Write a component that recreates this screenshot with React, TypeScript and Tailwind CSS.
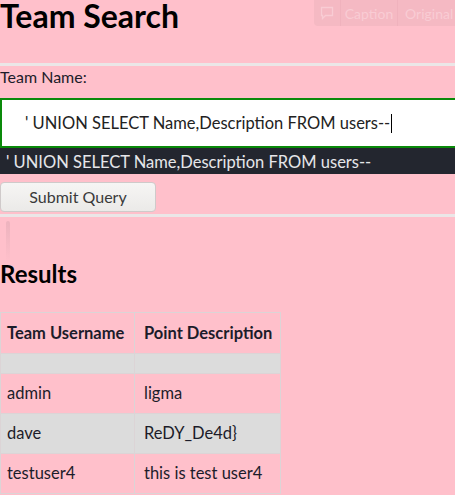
import React from "react";

export default function App() {
  const rows: [string, string, boolean][] = [
    ["", "", true],
    ["admin", "ligma", false],
    ["dave", "ReDY_De4d}", true],
    ["testuser4", "this is test user4", false],
  ];
  return (
    <div
      className="relative min-h-screen w-[455px] h-[495px] overflow-hidden bg-[#ffc0cb] text-[#111]"
      style={{ fontFamily: "Lato, 'Noto Sans', sans-serif" }}
    >
      {/* faint overlay toolbar */}
      <div className="absolute right-0 top-0 z-10 flex h-[26px] w-[141px] items-center rounded-bl-[4px] bg-[#f5b9c3] text-[14px] text-[#f9ccd4]">
        <div className="flex h-full w-[27px] items-center justify-center border-r border-[#f0b2bd]">
          <svg width="14" height="14" viewBox="0 0 14 14" fill="none" stroke="#f9ccd4" strokeWidth="1.3">
            <path d="M1.5 1.5h11v8h-7l-3 3v-3h-1z" />
          </svg>
        </div>
        <div className="flex h-full w-[57px] items-center justify-center border-r border-[#f0b2bd]">Caption</div>
        <div className="flex h-full flex-1 items-center pl-[7px]">Original</div>
      </div>

      <h1 className="text-[32px] font-bold leading-[32px] text-black">Team Search</h1>
      <div className="mt-[31px] h-[3px] w-full bg-[#ebe6e7]" />
      <div className="mt-[1px] text-[16px] leading-[20px] text-[#1c1c2a]">Team Name:</div>
      <div className="mt-[11px] flex h-[50px] w-[470px] items-center border-2 border-[#0a8a0a] bg-white pl-[23px] text-[16.5px] text-[#222]">
        <span>' UNION SELECT Name,Description FROM users--</span>
        <span className="ml-[1px] inline-block h-[19px] w-[1px] bg-black" />
      </div>
      <div className="flex h-[26px] w-full items-center bg-[#23262f] pl-[6px] pt-[2px] text-[16.5px] text-[#e6e6ea]">
        ' UNION SELECT Name,Description FROM users--
      </div>
      <button className="mt-[8px] flex h-[30px] w-[156px] items-center justify-center rounded-[4px] border border-[#cfcaca] bg-gradient-to-b from-[#f6f5f4] to-[#ebeae8] text-[16px] text-[#3a3a3a]">
        Submit Query
      </button>
      <div className="mt-[2px] h-[3px] w-full bg-[#ebe6e7]" />
      <div className="relative">
        <div className="absolute left-[6px] top-[4px] h-[42px] w-[4px] rounded-full bg-gradient-to-b from-[#edb3be] to-transparent" />
        <h2 className="pt-[45px] text-[24px] font-bold leading-[24px] text-black">Results</h2>
      </div>
      <table className="mt-[26px] w-[280px] table-fixed border-collapse text-[16.5px] text-[#1c1c2a]">
        <colgroup>
          <col className="w-[134px]" />
          <col className="w-[146px]" />
        </colgroup>
        <thead>
          <tr className="h-[41px]">
            <th className="whitespace-nowrap border border-[#dcd4d6] px-[6px] text-left align-middle font-bold">Team Username</th>
            <th className="whitespace-nowrap border border-[#dcd4d6] px-[9px] text-left align-middle font-bold">Point Description</th>
          </tr>
        </thead>
        <tbody>
          {rows.map(([a, b, gray], i) => (
            <tr key={i} className={(gray ? "bg-[#dcdcdc] " : "") + (a === "" ? "h-[20px]" : "h-[40px]")}>
              <td className="whitespace-nowrap border border-[#dcd4d6] px-[6px] align-middle">{a}</td>
              <td className="whitespace-nowrap border border-[#dcd4d6] px-[9px] align-middle">{b}</td>
            </tr>
          ))}
        </tbody>
      </table>
    </div>
  );
}
